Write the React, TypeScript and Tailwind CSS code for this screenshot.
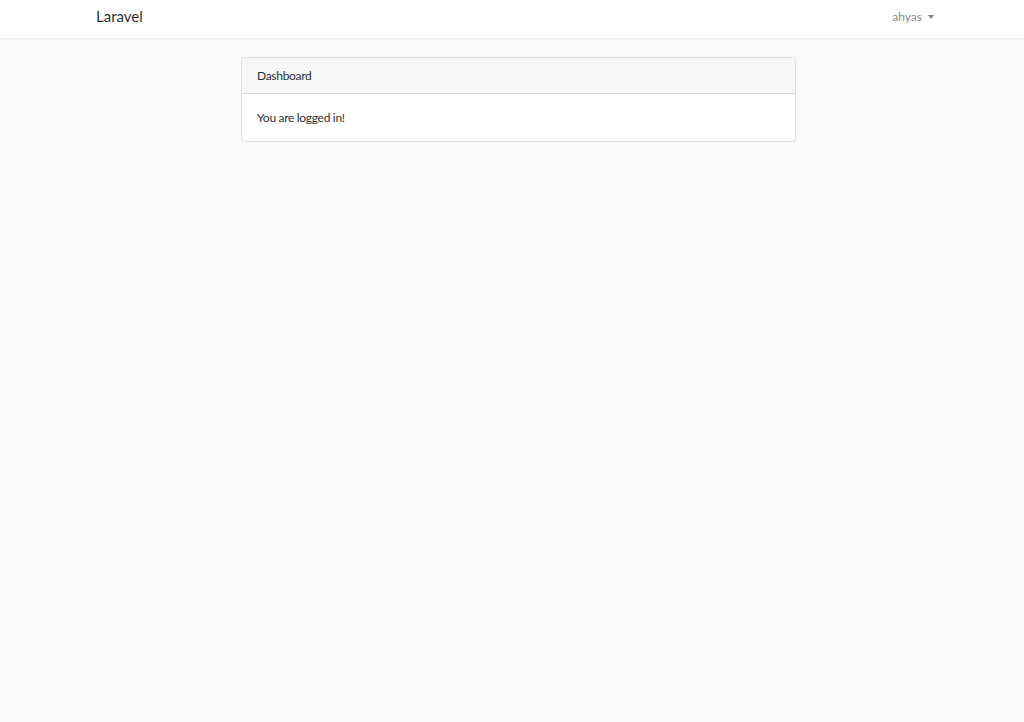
export default function App() {
  return (
    <div className="min-h-[722px] bg-[#f8fafc] text-[#2b2f33] font-['Lato','Noto_Sans',sans-serif]">
      <nav className="h-[38px] bg-white shadow-[0_1px_3px_rgba(0,0,0,0.08)]">
        <div className="flex h-full items-center justify-between pb-[5px] pl-[96px] pr-[90px]">
          <a className="text-[15px] text-black/85">Laravel</a>
          <button className="flex items-center gap-[6px] text-[12px] text-black/50">
            ahyas
            <span className="mt-[1px] h-0 w-0 border-x-[3.5px] border-t-[4px] border-x-transparent border-t-black/50" />
          </button>
        </div>
      </nav>

      <main className="pt-[19px] pl-[241px]">
        <div className="w-[555px] overflow-hidden rounded-[4px] border border-black/[0.12] bg-white">
          <div className="flex h-[36px] items-center border-b border-black/[0.12] bg-[#f7f7f7] px-[15px] text-[12px] tracking-[-0.3px]">
            Dashboard
          </div>
          <div className="flex h-[47px] items-center px-[15px] text-[12px] tracking-[-0.3px]">
            You are logged in!
          </div>
        </div>
      </main>
    </div>
  );
}
